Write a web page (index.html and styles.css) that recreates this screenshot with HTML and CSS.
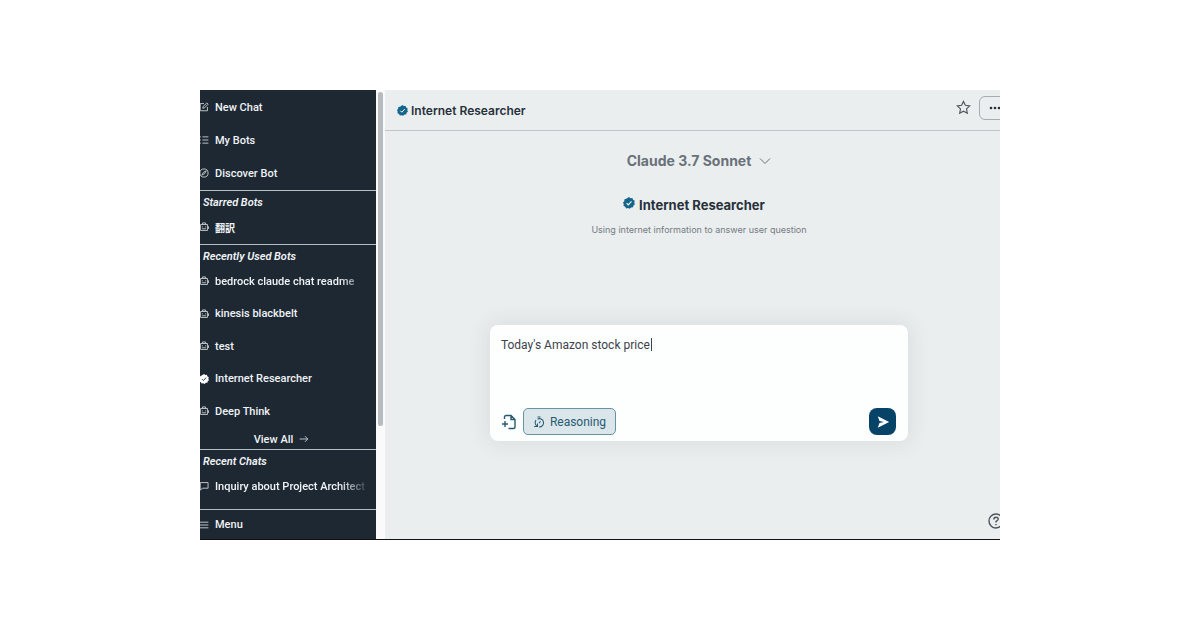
FILE: index.html
```html
<!DOCTYPE html>
<html lang="en">
<head>
    <meta charset="UTF-8">
    <meta name="viewport" content="width=device-width, initial-scale=1.0">
    <title>Internet Researcher</title>
    <link rel="stylesheet" href="styles.css">
</head>
<body>

<!-- Shared icons -->
<svg class="sprite" aria-hidden="true">
    <symbol id="icon-edit" viewBox="0 0 16 16"><path d="M8 2.500H2v11.500h11.500V8M6 10l.6-2.700L12.500 1.500l2 2-5.800 5.900z"/></symbol>
    <symbol id="icon-list" viewBox="0 0 16 16"><path d="M5.500 3H15M5.500 8H15M5.500 13H15M1 3h2M1 8h2M1 13h2"/></symbol>
    <symbol id="icon-compass" viewBox="0 0 16 16"><circle cx="8" cy="8" r="6.500"/><path d="M11.500 4.500 9 9l-4.500 2.500L7 7z"/></symbol>
    <symbol id="icon-robot" viewBox="0 0 16 16"><path d="M5.500 3.500V1.500h5v2M2.500 4h11v9.500h-11zM.8 7v4M15.200 7v4M5 10.800h6M5.500 7v1.500M10.500 7v1.500"/></symbol>
    <symbol id="icon-chat" viewBox="0 0 16 16"><path d="M2 2.500h12.500v9H6L2 14.500z"/></symbol>
    <symbol id="icon-menu" viewBox="0 0 16 16"><path d="M1 3.500h14M1 8h14M1 12.500h14"/></symbol>
    <symbol id="icon-arrow" viewBox="0 0 16 16"><path d="M1 8h13M9.500 3.500 14 8l-4.500 4.500"/></symbol>
    <symbol id="icon-verified" viewBox="0 0 16 16">
        <path class="seal" d="m8 0 2 1.500 2.500-.2.900 2.300L15.600 5 15 7.500l.9 2.300-2 1.600-.5 2.400-2.500.1L9 15.800l-2.300-1-2.500.4-1.200-2.200L.7 12l.3-2.500L0 7.300l1.700-1.800.3-2.500 2.400-.6z"/>
        <path class="tick" d="m4.800 8.300 2.200 2.200 4.300-4.600"/>
    </symbol>
</svg>

<div class="app">
    <aside class="sidebar">
        <nav class="group main-nav">
            <ul class="links">
                <li><a href="#"><svg class="icon"><use href="#icon-edit"/></svg>New Chat</a></li>
                <li><a href="#"><svg class="icon"><use href="#icon-list"/></svg>My Bots</a></li>
                <li><a href="#"><svg class="icon"><use href="#icon-compass"/></svg>Discover Bot</a></li>
            </ul>
        </nav>
        <section class="group">
            <h2>Starred Bots</h2>
            <ul class="links">
                <li><a class="japanese" href="#" lang="ja"><svg class="icon"><use href="#icon-robot"/></svg>翻訳</a></li>
            </ul>
        </section>
        <section class="group recent-bots">
            <h2>Recently Used Bots</h2>
            <ul class="links">
                <li><a href="#"><svg class="icon"><use href="#icon-robot"/></svg><span class="fade">bedrock claude chat readme</span></a></li>
                <li><a href="#"><svg class="icon"><use href="#icon-robot"/></svg>kinesis blackbelt</a></li>
                <li><a href="#"><svg class="icon"><use href="#icon-robot"/></svg>test</a></li>
                <li><a href="#"><svg class="icon verified-white"><use href="#icon-verified"/></svg>Internet Researcher</a></li>
                <li><a href="#"><svg class="icon"><use href="#icon-robot"/></svg>Deep Think</a></li>
            </ul>
            <a class="view-all" href="#">View All <svg class="icon"><use href="#icon-arrow"/></svg></a>
        </section>
        <section class="recent-chats">
            <h2>Recent Chats</h2>
            <ul class="links">
                <li><a href="#"><svg class="icon"><use href="#icon-chat"/></svg><span class="fade">Inquiry about Project Architect</span></a></li>
            </ul>
        </section>
        <button class="menu" type="button"><svg class="icon"><use href="#icon-menu"/></svg>Menu</button>
    </aside>

    <div class="scrollbar"><div class="thumb"></div></div>

    <main class="main">
        <header class="topbar">
            <h1><svg class="verified"><use href="#icon-verified"/></svg>Internet Researcher</h1>
            <button class="star" type="button" aria-label="Star bot">
                <svg viewBox="0 0 16 16"><path d="m8 1.500 2 4.200 4.600.6-3.400 3.200.9 4.600L8 11.900l-4.100 2.200.9-4.600L1.400 6.300 6 5.700z"/></svg>
            </button>
            <button class="more" type="button" aria-label="More actions">
                <svg viewBox="0 0 14 4"><circle cx="2" cy="2" r="1.300"/><circle cx="6" cy="2" r="1.300"/><circle cx="10" cy="2" r="1.300"/></svg>
            </button>
        </header>

        <div class="intro">
            <button class="model" type="button">Claude 3.7 Sonnet
                <svg viewBox="0 0 12 8"><path d="m1 1.500 5 5 5-5"/></svg>
            </button>
            <h2 class="bot-name"><svg class="verified"><use href="#icon-verified"/></svg>Internet Researcher</h2>
            <p class="bot-description">Using internet information to answer user question</p>
        </div>

        <form class="composer">
            <textarea aria-label="Message">Today's Amazon stock price</textarea>
            <span class="caret"></span>
            <div class="actions">
                <button class="attach" type="button" aria-label="Attach file">
                    <svg viewBox="0 0 16 16"><path d="M3.500 5V3q0-1.500 1.500-1.500h5L14 5.500V13q0 1.500-1.500 1.500h-5M10 1.500v4h4M1 10h6M4 7v6"/></svg>
                </button>
                <button class="reasoning" type="button">
                    <svg viewBox="0 0 16 16"><path d="M1.500 14H6v-4M5.500 13.500A5.500 5.500 0 0 1 4 5.500M6 4.200a5.500 5.500 0 1 1 2 10.300M8 9.500l2-2.500M6 1.200h4"/></svg>Reasoning
                </button>
                <button class="send" type="submit" aria-label="Send">
                    <svg viewBox="0 0 16 16"><path d="M2 1.500 15 8 2 14.500 4 9.200 9 8 4 6.800z"/></svg>
                </button>
            </div>
        </form>

        <button class="help" type="button" aria-label="Help">
            <svg viewBox="0 0 16 16"><circle cx="8" cy="8" r="7"/><path d="M5.800 6.400Q5.800 4.200 8 4.200t2.200 1.900Q10.200 7.400 8 8.500v1M8 11v1.300"/></svg>
        </button>
    </main>
</div>

</body>
</html>
```
FILE: styles.css
```css
* {
    box-sizing: border-box;
}
body {
    margin: 0;
    min-height: 100vh;
    padding: 90px 200px;
    display: flex;
    background-color: #fff;
    color: #27313b;
    font-family: Inter, "Noto Sans CJK JP", sans-serif;
}
h1, h2, p, ul {
    margin: 0;
    padding: 0;
}
ul {
    list-style: none;
}
a {
    color: inherit;
    text-decoration: none;
}
button {
    padding: 0;
    border: none;
    background: none;
    color: inherit;
    font: inherit;
    cursor: pointer;
}
svg {
    flex: none;
    fill: none;
    stroke: currentColor;
    stroke-width: 1.4;
}
.sprite {
    display: none;
}
.app {
    flex: 1;
    display: flex;
    overflow: hidden;
    border-bottom: 1px solid #111;
}

/* Sidebar */
.sidebar {
    width: 22%;
    display: flex;
    flex-direction: column;
    background-color: #1d2833;
    color: #f0f3f5;
    font-family: Roboto, "Noto Sans CJK JP", sans-serif;
    font-size: 11px;
    font-weight: 500;
    white-space: nowrap;
}
.group {
    padding-bottom: 1px;
    border-bottom: 1px solid #b3bcc1;
}
.main-nav {
    padding-top: 1px;
}
.sidebar h2 {
    padding: 3px 3px 0;
    font-size: 11px;
    line-height: 17px;
    font-weight: 600;
    font-style: italic;
}
.links a {
    height: 32px;
    display: flex;
    align-items: center;
    gap: 6px;
    margin-left: -1px;
}
.links .japanese {
    font-size: 10px;
    font-weight: 700;
}
.main-nav li + li {
    padding-top: 1px;
}
.icon {
    width: 10px;
    height: 10px;
    opacity: 0.85;
}
.verified-white {
    opacity: 1;
    --seal: #fff;
    --tick: #1d2833;
}
.fade {
    -webkit-mask-image: linear-gradient(to right, #000 125px, transparent 155px);
    mask-image: linear-gradient(to right, #000 125px, transparent 155px);
}
.recent-bots {
    padding-bottom: 0;
}
.recent-bots .links {
    height: 162px;
    display: flex;
    flex-direction: column;
    justify-content: space-between;
}
.view-all {
    height: 22px;
    display: flex;
    align-items: center;
    justify-content: center;
    gap: 6px;
    padding: 2px 13px 0 0;
}
.menu {
    height: 30px;
    margin-top: auto;
    display: flex;
    align-items: center;
    gap: 6px;
    border-top: 1px solid #b3bcc1;
}
.menu .icon {
    margin-left: -1px;
}
.scrollbar {
    width: 9px;
    padding: 2px;
    background-color: #fafafa;
}
.thumb {
    height: 75%;
    border-radius: 3px;
    background-color: #b5bbbe;
}

/* Main panel, runs past the right edge of the window */
.main {
    position: relative;
    flex: 1;
    margin-right: -13px;
    display: flex;
    flex-direction: column;
    align-items: center;
    background-color: #ebeeee;
}
.topbar {
    width: 100%;
    height: 41px;
    display: flex;
    align-items: center;
    padding: 0 4px 0 12px;
    border-bottom: 1px solid #bfc4c6;
}
.topbar h1 {
    flex: 1;
    display: flex;
    align-items: center;
    gap: 3px;
    font-size: 12px;
    font-weight: 600;
}
.seal {
    fill: var(--seal, #14658c);
    stroke: none;
}
.tick {
    stroke: var(--tick, #fff);
}
.verified {
    width: 11px;
    height: 11px;
}
.star svg {
    display: block;
    width: 15px;
    height: 15px;
    stroke-width: 1.2;
}
.star {
    margin: 0 8px 6px 0;
    color: #4d555c;
}
.more {
    width: 30px;
    height: 24px;
    margin-bottom: 5px;
    border: 1px solid #a6adb1;
    border-radius: 6px;
}
.more svg {
    display: block;
    width: 14px;
    height: 4px;
    margin-left: 9px;
    fill: currentColor;
    stroke: none;
}
.intro {
    display: flex;
    flex-direction: column;
    align-items: center;
    padding-top: 20px;
}
.model {
    display: flex;
    align-items: center;
    gap: 8px;
    color: #68717a;
    font-size: 14px;
    line-height: 20px;
    font-weight: 700;
}
.model svg {
    width: 12px;
    height: 8px;
    stroke-width: 1;
}
.bot-name {
    display: flex;
    gap: 4px;
    margin-top: 24px;
    padding-right: 10px;
    font-size: 13px;
    line-height: 20px;
    font-weight: 700;
}
.bot-name .verified {
    width: 12px;
    height: 12px;
    margin-top: 2px;
}
.bot-description {
    margin-top: 8px;
    color: #737b82;
    font-size: 9px;
    line-height: 14px;
}
.composer {
    position: relative;
    width: 66.6%;
    height: 116px;
    margin-top: 88px;
    padding: 10px 12px 10px 10px;
    display: flex;
    flex-direction: column;
    border-radius: 8px;
    background-color: #fdfefe;
    box-shadow: 0 0 20px 4px rgba(60, 70, 90, 0.08);
}
.composer textarea {
    flex: 1;
    padding: 0 1px;
    border: none;
    outline: none;
    resize: none;
    background: none;
    color: #3c434a;
    font: 12px/20px Roboto, sans-serif;
}
.caret {
    position: absolute;
    top: 13px;
    left: 161px;
    width: 1px;
    height: 13px;
    background-color: #3c434a;
}
.actions {
    display: flex;
    align-items: center;
    gap: 6px;
    margin-bottom: -4px;
    color: #285b72;
}
.attach svg {
    display: block;
    width: 16px;
    height: 16px;
}
.attach {
    margin-left: 1px;
}
.reasoning {
    height: 27px;
    padding: 0 9px;
    display: flex;
    align-items: center;
    gap: 5px;
    border: 1px solid #6893a3;
    border-radius: 5px;
    background-color: #dbe6ea;
    font-family: Roboto, sans-serif;
    font-size: 12px;
}
.reasoning svg {
    width: 12px;
    height: 12px;
}
.send {
    width: 27px;
    height: 27px;
    margin-left: auto;
    display: flex;
    align-items: center;
    justify-content: center;
    border-radius: 8px;
    background-color: #074367;
    color: #fff;
}
.send svg {
    width: 14px;
    height: 14px;
    fill: currentColor;
    stroke: none;
}
.help {
    position: absolute;
    right: 9px;
    bottom: 10px;
    color: #4d555c;
}
.help svg {
    display: block;
    width: 16px;
    height: 16px;
}
```
